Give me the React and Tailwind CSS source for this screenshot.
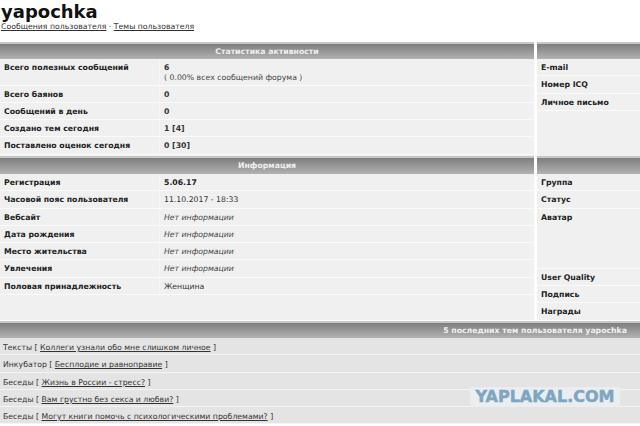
const F = { fontFamily: '"DejaVu Sans", Verdana, sans-serif' };

function Bar({ children, h = "h-[15px]", className = "justify-center" }) {
  return (
    <div className={`${h} border-t-2 border-[#c8c8c8] box-content bg-gradient-to-b from-[#7e7e7e] to-[#b2b2b2] flex items-center text-[7.75px] font-bold text-[#f0f0f0] leading-none ${className}`}>
      {children}
    </div>
  );
}

function Row({ label, children, h = "h-[17.25px]" }) {
  return (
    <div className={`${h} flex border-b border-[#fafafa] box-border`}>
      <div className="w-[160px] shrink-0 pl-[4px] pt-[3px] font-bold text-[#222] border-r border-[#f6f6f6]">{label}</div>
      <div className="flex-1 pl-[4px] pt-[3px] text-[#333]">{children}</div>
    </div>
  );
}

function Side({ children, h = "h-[17.25px]", line = true }) {
  return <div className={`${h} box-border pl-[4px] pt-[3px] font-bold text-[#222] ${line ? "border-b border-[#fafafa]" : ""}`}>{children}</div>;
}

function Topic({ cat, title }) {
  return (
    <div className="h-[17.25px] box-border border-b border-[#f4f4f4] pl-[3px] pt-[4px] text-[#333] bg-[#e4e4e4]">
      {cat} [ <span className="underline text-[#333]">{title}</span> ]
    </div>
  );
}

const NI = () => <i className="text-[#444]">Нет информации</i>;

export default function App() {
  return (
    <div style={F} className="relative w-[640px] h-[426px] overflow-hidden bg-white text-[7.75px] leading-[11px]">
      <div className="h-[20px] pl-[1px] text-[18px] leading-[23px] font-bold text-[#111]">yapochka</div>
      <div className="h-[22px] pl-[1px] pt-[1px] text-[#333]">
        <span className="underline">Сообщения пользователя</span> · <span className="underline">Темы пользователя</span>
      </div>

      <div className="flex gap-[3px] bg-white">
        <div className="w-[534px] shrink-0">
          <Bar>Статистика активности</Bar>
          <div className="bg-[#f0f0f0] h-[97px]">
            <Row label="Всего полезных сообщений" h="h-[26.5px]">
              <div className="font-bold">6</div>
              <div className="text-[#444] -mt-[1px]">( 0.00% всех сообщений форума )</div>
            </Row>
            <Row label="Всего баянов"><b>0</b></Row>
            <Row label="Сообщений в день"><b>0</b></Row>
            <Row label="Создано тем сегодня"><b>1 [4]</b></Row>
            <Row label="Поставлено оценок сегодня"><b>0 [30]</b></Row>
          </div>
          <Bar h="h-[16px]">Информация</Bar>
          <div className="bg-[#f0f0f0] h-[146px]">
            <Row label="Регистрация"><b className="text-[#222]">5.06.17</b></Row>
            <Row label="Часовой пояс пользователя">11.10.2017 - 18:33</Row>
            <Row label="Вебсайт"><NI /></Row>
            <Row label="Дата рождения"><NI /></Row>
            <Row label="Место жительства"><NI /></Row>
            <Row label="Увлечения"><NI /></Row>
            <Row label="Половая принадлежность">Женщина</Row>
          </div>
        </div>

        <div className="flex-1">
          <Bar />
          <div className="bg-[#f0f0f0] h-[97px]">
            <Side>E-mail</Side>
            <Side>Номер ICQ</Side>
            <Side>Личное письмо</Side>
          </div>
          <Bar h="h-[16px]" />
          <div className="bg-[#f0f0f0] h-[146px]">
            <Side>Группа</Side>
            <Side>Статус</Side>
            <Side h="h-[60px]">Аватар</Side>
            <Side>User Quality</Side>
            <Side>Подпись</Side>
            <Side line={false}>Награды</Side>
          </div>
        </div>
      </div>

      <div className="mt-[1px]">
        <Bar className="justify-end pr-[13px]">5 последних тем пользователя yapochka</Bar>
        <Topic cat="Тексты" title="Коллеги узнали обо мне слишком личное" />
        <Topic cat="Инкубатор" title="Бесплодие и равноправие" />
        <Topic cat="Беседы" title="Жизнь в России - стресс?" />
        <Topic cat="Беседы" title="Вам грустно без секса и любви?" />
        <Topic cat="Беседы" title="Могут книги помочь с психологическими проблемами?" />
      </div>

      <div className="absolute left-[470px] top-[387px] w-[150px] h-[20px] bg-[#eaeef0] flex items-center justify-center text-[16px] font-bold text-[#7fa6c0] leading-none [-webkit-text-stroke:0.5px_#7fa6c0]">
        YAPLAKAL.COM
      </div>
    </div>
  );
}
